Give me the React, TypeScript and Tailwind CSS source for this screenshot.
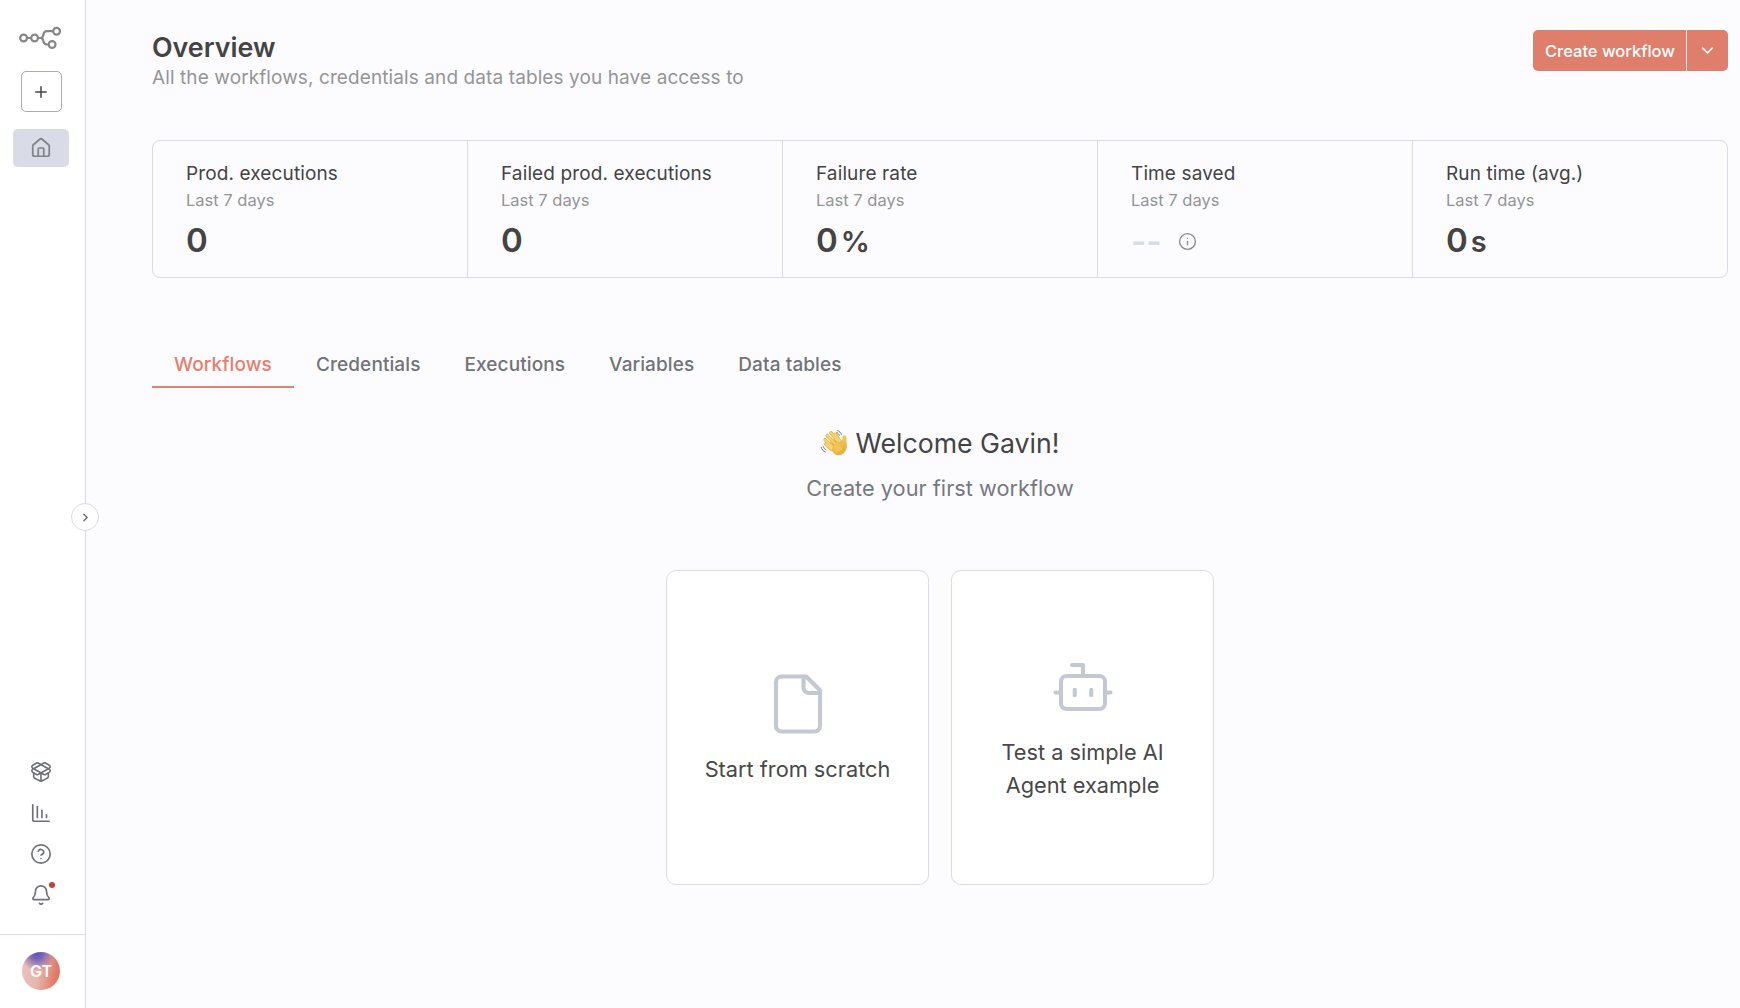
import type { ReactNode } from 'react';
import { Bell, Bot, ChartColumnDecreasing, ChevronDown, ChevronRight, CircleQuestionMark, House, Info, PackageOpen, Plus } from 'lucide-react';

interface Metric {
  label: string;
  value: string;
  unit?: string;
}

const METRICS: Metric[] = [
  { label: 'Prod. executions', value: '0' },
  { label: 'Failed prod. executions', value: '0' },
  { label: 'Failure rate', value: '0', unit: '%' },
  { label: 'Time saved', value: '--' },
  { label: 'Run time (avg.)', value: '0', unit: 's' },
];

const TABS = ['Workflows', 'Credentials', 'Executions', 'Variables', 'Data tables'];

function Logo() {
  return (
    <svg width="44" height="24" viewBox="0 0 44 24" fill="none" stroke="#868686" strokeWidth="2.2">
      <circle cx="4.6" cy="12" r="3.4" />
      <circle cx="15.6" cy="12" r="3.4" />
      <circle cx="37.6" cy="5.2" r="3.4" />
      <circle cx="33.1" cy="18.5" r="3.4" />
      <path d="M8 12h4.2M19 12h2.4c1.6 0 2.5-1 2.8-2.4l.3-1.4c.4-1.9 1.5-3 3.3-3h6.4" />
      <path d="M21.4 12c1.6 0 2.5 1 2.8 2.4l.3 1.2c.4 1.9 1.5 2.9 3.3 2.9h1.9" />
    </svg>
  );
}

function WavingHand() {
  return (
    <svg width="28" height="28" viewBox="0 0 28 28" fill="none" strokeLinecap="round">
      <defs>
        <linearGradient id="skin" x1="8" y1="4" x2="20" y2="27" gradientUnits="userSpaceOnUse">
          <stop stopColor="#f9d978" />
          <stop offset="1" stopColor="#e5ad3a" />
        </linearGradient>
      </defs>
      <path d="M7.8 15.6 13.2 10l6.6 3.6 2.6-3.2c.2-1.7-.2-2.8.5-3.7.9-1.1 2.8-.4 3.4 1.1.5 1.5-.2 3.6.4 6.2.7 3.2.1 6.7-2.3 9.5-2.9 3.3-7.500 3.500-10.400.9Z" fill="url(#skin)" />
      <path d="m14.8 14.5-7.600-7.900M17.600 12 11 3.900M12 17.600 5.200 10.800M20 12.500l-4.400-7.100M11.500 20.500l-5.800-5.400" stroke="#d59d35" strokeWidth="3.3" />
      <path d="m14.8 14.5-7.600-7.900M17.600 12 11 3.900M12 17.600 5.200 10.800M20 12.500l-4.400-7.100M11.500 20.500l-5.800-5.400" stroke="#f7d16b" strokeWidth="2.5" />
      <path d="m12 19 5-6 4 2.500 1 5-5 3Z" fill="#f1c254" />
      <path d="M17.500 1.600c2 .6 3.300 2 3.900 3.900M16.700 3.600c1.300.5 2.200 1.400 2.600 2.700M1.200 18.200c.5 2.300 1.900 4 4.100 4.800M3.300 17.600c.4 1.500 1.300 2.600 2.700 3.200" stroke="#77797e" strokeWidth="1" />
    </svg>
  );
}

function BlankFile() {
  return (
    <svg width="66" height="66" viewBox="0 0 24 24" fill="none" stroke="currentColor" strokeWidth="1.5" strokeLinecap="round" strokeLinejoin="round">
      <path d="M15 2H6a2 2 0 0 0-2 2v16a2 2 0 0 0 2 2h12a2 2 0 0 0 2-2V7Z" />
      <path d="M14 2v4a2 2 0 0 0 2 2h4" />
    </svg>
  );
}

function Sidebar() {
  return (
    <aside className="relative flex w-[86px] shrink-0 flex-col border-r border-[#d9dce6] bg-white">
      <div className="flex flex-col items-center pr-[3px] pt-[26px]">
        <Logo />
        <button aria-label="Create" className="mt-[21px] flex h-[41px] w-[41px] items-center justify-center rounded-[5px] border border-[#a9abb9] text-[#444]">
          <Plus size={18} strokeWidth={2} />
        </button>
        <button aria-label="Overview" className="mt-[17px] flex h-[38px] w-14 items-center justify-center rounded-[5px] bg-[#d9dce6] text-[#808389]">
          <House size={22} strokeWidth={1.9} />
        </button>
      </div>

      <div className="mt-auto flex flex-col items-center gap-[19px] pb-7 pr-[3px] text-[#6f7177]">
        <PackageOpen size={22} strokeWidth={1.8} />
        <ChartColumnDecreasing size={22} strokeWidth={1.8} />
        <CircleQuestionMark size={22} strokeWidth={1.8} />
        <div className="relative">
          <Bell size={22} strokeWidth={1.8} />
          <span className="absolute -right-[3px] -top-[2px] h-1.5 w-1.5 rounded-full bg-[#cb3d37]" />
        </div>
      </div>

      <div className="flex h-[74px] justify-center border-t border-[#d9dce6] pr-[3px] pt-[17px]">
        <div className="flex h-[38px] w-[38px] items-center justify-center rounded-full bg-[radial-gradient(circle_at_40%_4%,#5a54bd_0%,#7b66b8_14%,transparent_40%),linear-gradient(100deg,#e9c0bb_10%,#e8b5ac_45%,#e07a66_85%)] text-base font-semibold text-white">
          GT
        </div>
      </div>

      <button aria-label="Expand" className="absolute -right-[14px] top-[503px] flex h-7 w-7 items-center justify-center rounded-full border border-[#d9dce6] bg-white text-[#6b6b6b]">
        <ChevronRight size={13} strokeWidth={2.6} />
      </button>
    </aside>
  );
}

function MetricCell({ metric }: { metric: Metric }) {
  const empty = metric.value === '--';
  return (
    <div className="flex-1 border-r border-[#d9dce6] pl-[33px] pt-[21px] last:border-r-0">
      <div className="text-[19px] leading-6 tracking-[0.12px] text-[#444]">{metric.label}</div>
      <div className="mt-0.5 text-[16.5px] leading-6 text-[#959595]">Last 7 days</div>
      {empty ? (
        <div className="mt-[13px] flex h-8 items-center gap-4">
          <span className="text-[33px] font-semibold leading-8 text-[#d9dce6]">--</span>
          <Info size={19} strokeWidth={1.7} className="text-[#8a8a8a]" />
        </div>
      ) : (
        <div className="mt-3 flex h-8 items-baseline gap-[3px] leading-8 text-[#444]">
          <span className="text-[33px] font-semibold">{metric.value}</span>
          {metric.unit && <span className="text-[29px] font-semibold">{metric.unit}</span>}
        </div>
      )}
    </div>
  );
}

function StarterCard({ icon, children }: { icon: ReactNode; children: ReactNode }) {
  return (
    <button className="flex h-[315px] w-[263px] flex-col items-center justify-center gap-4 rounded-[10px] border border-[#d9dce6] bg-white pt-px text-[#c3c8d4]">
      {icon}
      <span className="text-[21.75px] leading-[33px] text-[#484848]">{children}</span>
    </button>
  );
}

export default function App() {
  return (
    <div className="flex h-[1008px] w-[1740px] overflow-hidden bg-[#fcfcff] font-[Inter,sans-serif]">
      <Sidebar />

      <main className="flex-1 pl-[66px] pr-3 pt-[30px]">
        {/* Header */}
        <header className="flex h-[110px] items-start justify-between">
          <div>
            <h1 className="text-[26.8px] font-semibold leading-[34px] text-[#444]">Overview</h1>
            <p className="text-[19px] leading-7 tracking-[0.1px] text-[#959595]">All the workflows, credentials and data tables you have access to</p>
          </div>
          <div className="flex h-[41px] gap-px overflow-hidden rounded-[5px] bg-[#fbe9e5] text-white">
            <button className="w-[153px] bg-[#df7f6b] pl-px pt-px text-[16.5px] font-medium">Create workflow</button>
            <button aria-label="More create options" className="flex w-[41px] items-center justify-center bg-[#df7f6b]">
              <ChevronDown size={19} strokeWidth={1.8} />
            </button>
          </div>
        </header>

        {/* Insights summary */}
        <section className="flex h-[138px] rounded-lg border border-[#d9dce6]">
          {METRICS.map((m) => <MetricCell key={m.label} metric={m} />)}
        </section>

        <nav className="mt-[68px] flex h-[42px]">
          {TABS.map((tab, i) => (
            <button
              key={tab}
              className={`border-b-2 px-[22px] pb-0.5 text-[19px] font-medium tracking-[0.1px] ${i === 0 ? 'border-[#e4806b] text-[#e4806b]' : 'border-transparent text-[#717377]'}`}
            >
              {tab}
            </button>
          ))}
        </nav>

        {/* Empty state */}
        <section className="flex flex-col items-center pt-[38px]">
          <h2 className="flex items-center gap-[7px] text-[26.7px] leading-[34px] text-[#444]">
            <WavingHand />
            Welcome Gavin!
          </h2>
          <p className="mt-3 text-[21.75px] leading-[33px] text-[#77797e]">Create your first workflow</p>
          <div className="mt-[65px] flex gap-[22px]">
            <StarterCard icon={<BlankFile />}>Start from scratch</StarterCard>
            <StarterCard icon={<Bot size={66} strokeWidth={1.5} />}>
              Test a simple AI<br />Agent example
            </StarterCard>
          </div>
        </section>
      </main>
    </div>
  );
}
